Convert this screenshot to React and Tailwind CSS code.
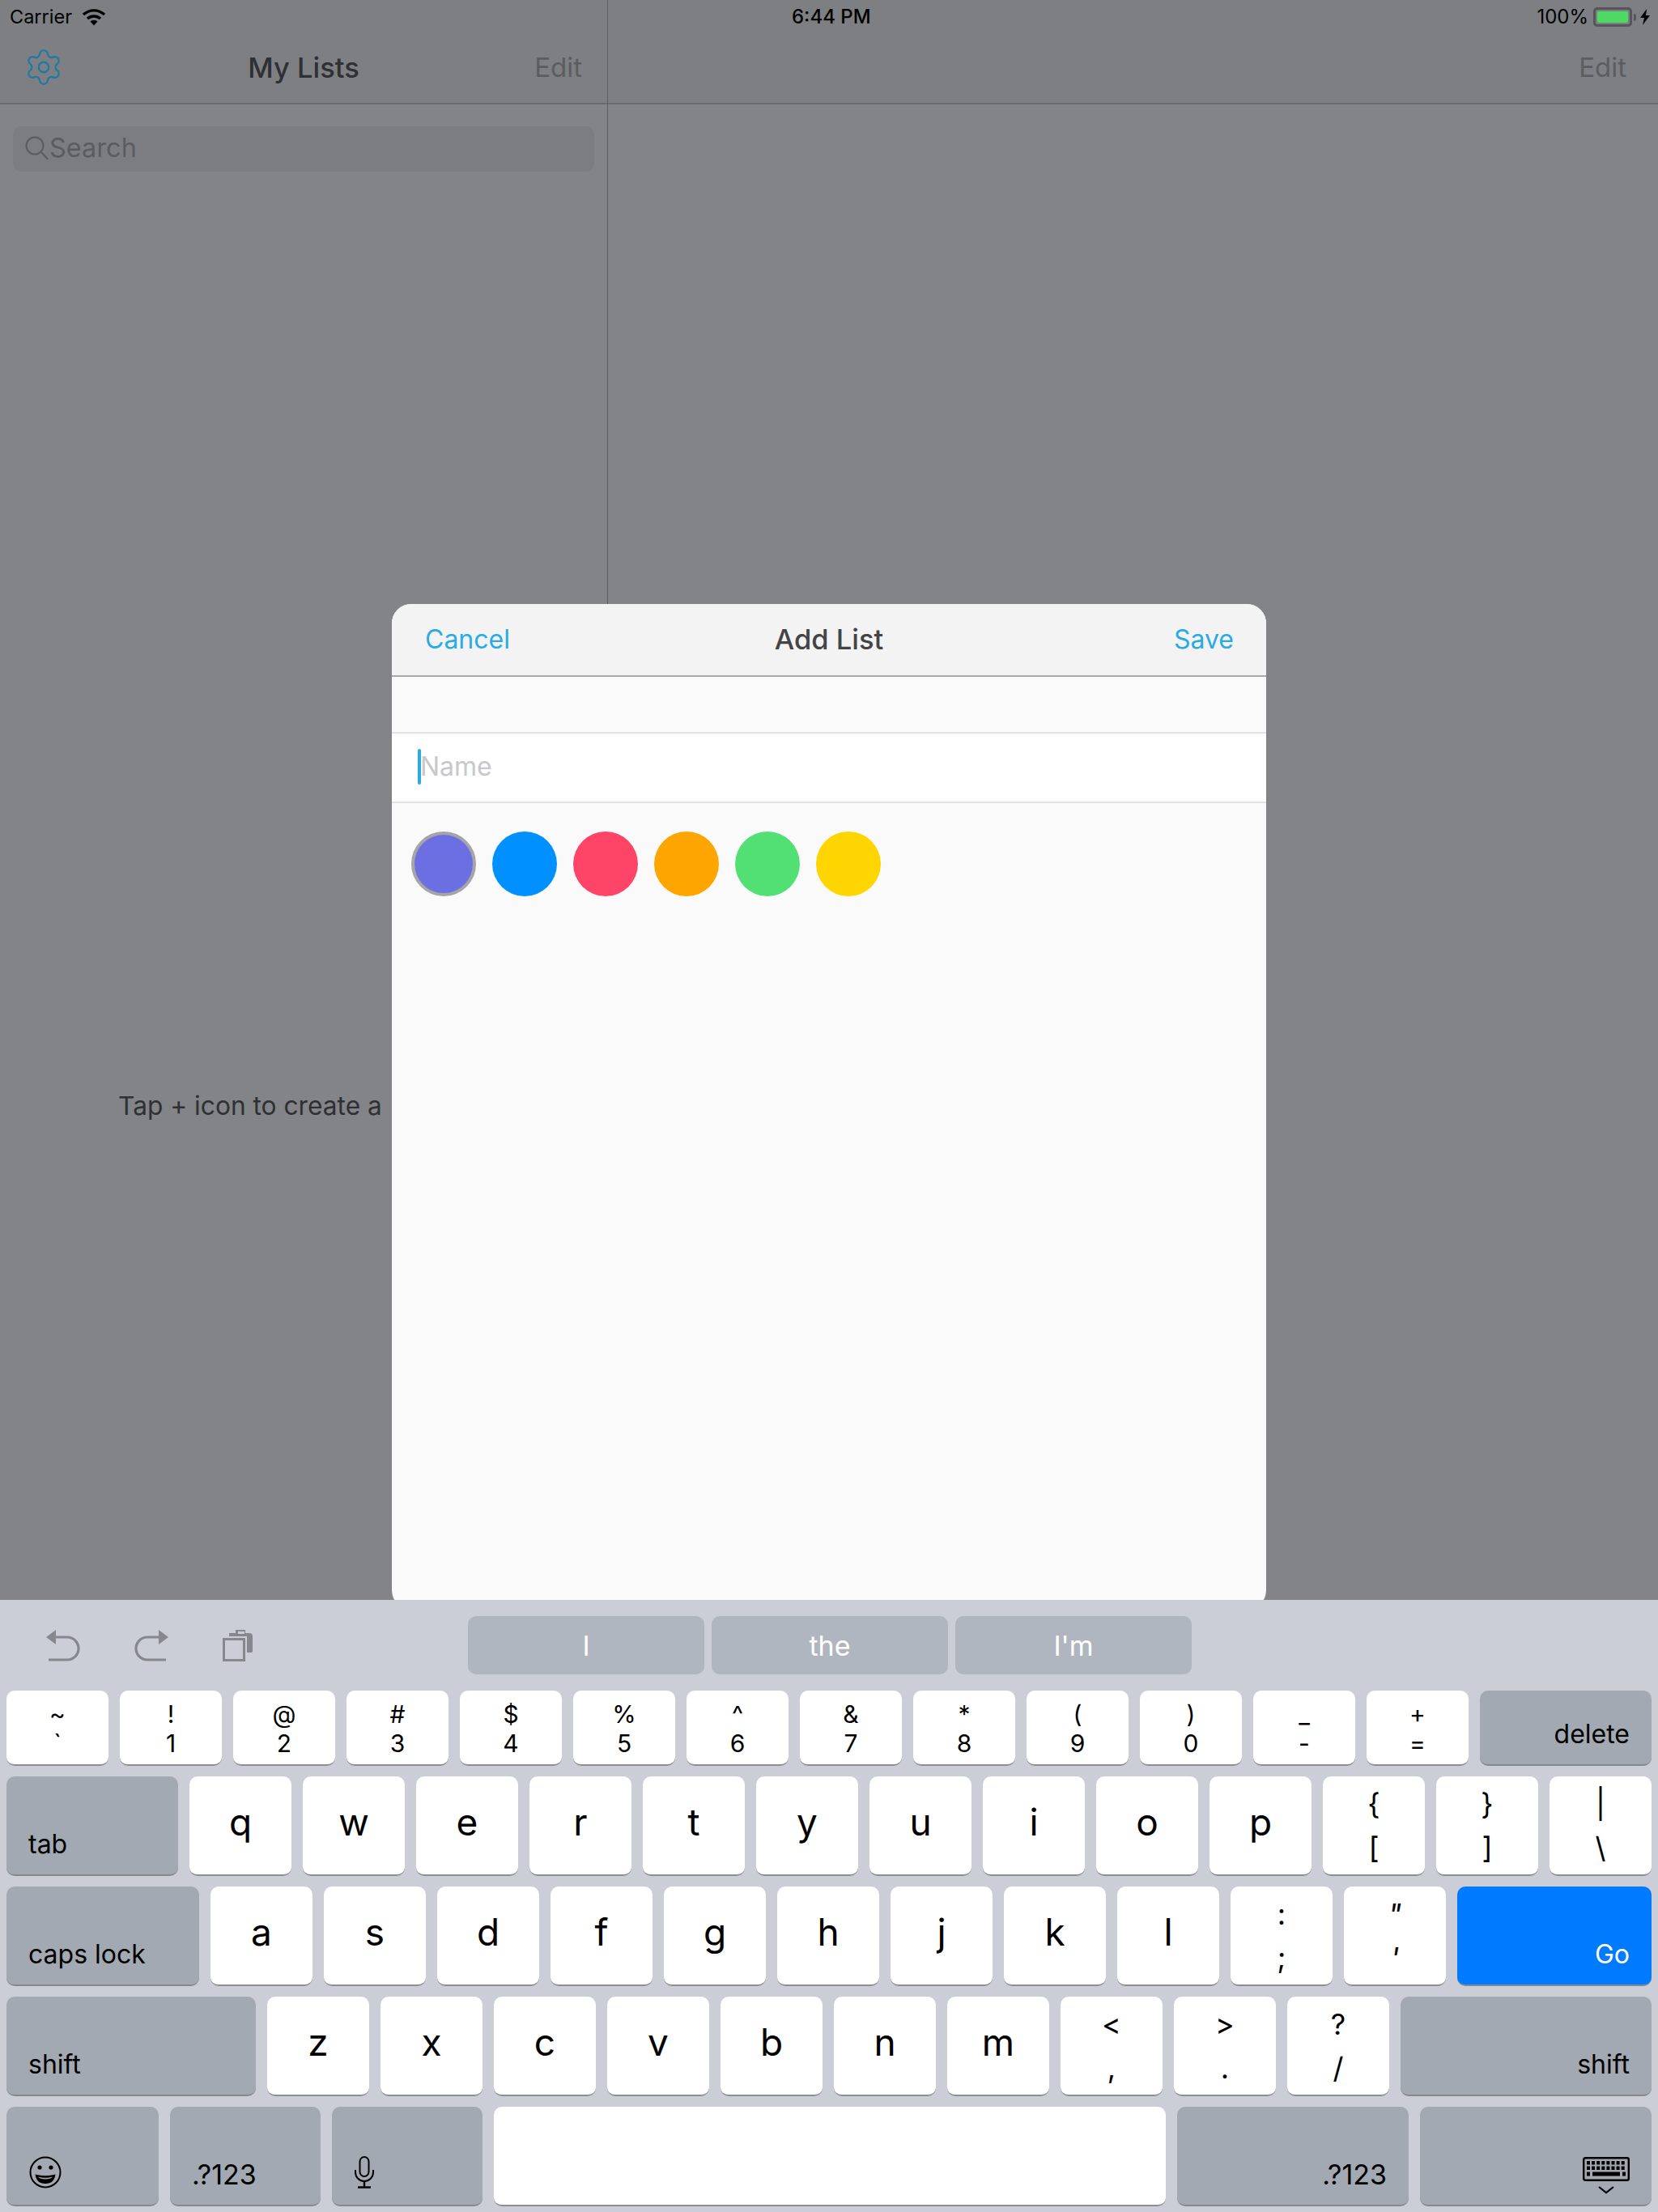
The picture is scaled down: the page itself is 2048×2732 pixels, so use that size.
import { Settings } from 'lucide-react';

const row1 = [['~', '`'], ['!', '1'], ['@', '2'], ['#', '3'], ['$', '4'], ['%', '5'], ['^', '6'], ['&', '7'], ['*', '8'], ['(', '9'], [')', '0'], ['_', '-'], ['+', '=']];

function Key({ children, className = 'w-[126px]' }) {
  return (
    <div className={`${className} shrink-0 h-full rounded-[10px] bg-white border-b-2 border-[#8b8e94] text-black flex flex-col items-center`}>
      {children}
    </div>
  );
}

function Letter({ ch }) {
  return (
    <Key>
      <span className="text-[46px] leading-[56px] mt-[28px]">{ch}</span>
    </Key>
  );
}

function Sym({ top, bottom, slant }) {
  return (
    <Key>
      <span className={`text-[36px] leading-[54px] mt-[7px] ${slant ? 'italic' : ''}`}>{top}</span>
      <span className={`text-[36px] leading-[54px] ${slant ? 'italic' : ''}`}>{bottom}</span>
    </Key>
  );
}

function NumKey({ top, bottom }) {
  return (
    <Key>
      <span className="text-[30px] leading-[36px] mt-[11px]">{top}</span>
      <span className="text-[30px] leading-[36px]">{bottom}</span>
    </Key>
  );
}

function Special({ className, children, right }) {
  return (
    <div className={`${className} shrink-0 h-full rounded-[10px] bg-[#a3a9b3] border-b-2 border-[#85888e] flex items-end px-[27px] pb-[19px] text-[32px] leading-[36px] text-black ${right ? 'justify-end' : 'justify-start'}`}>
      {children}
    </div>
  );
}

function Wifi() {
  return (
    <svg width="30" height="22" viewBox="0 0 30 22" className="ml-[12px]">
      <path d="M2 8 a19 19 0 0 1 26 0" fill="none" stroke="#000" strokeWidth="3.4" />
      <path d="M7 13 a12 12 0 0 1 16 0" fill="none" stroke="#000" strokeWidth="3.4" />
      <path d="M10.5 16.5 a6.5 6.5 0 0 1 9 0 L15 21.5 Z" fill="#000" />
    </svg>
  );
}

function SearchIcon() {
  return (
    <svg width="30" height="30" viewBox="0 0 30 30" className="shrink-0">
      <circle cx="12" cy="12" r="10.5" fill="none" stroke="#5b5c60" strokeWidth="2" />
      <path d="M19.5 19.5 L28 28.5" stroke="#5b5c60" strokeWidth="2.2" />
    </svg>
  );
}

function UndoIcon() {
  return (
    <svg width="44" height="40" viewBox="0 0 44 40" className="shrink-0">
      <path d="M0 9 L12 0 V18 Z" fill="#86888d" />
      <path d="M10 9 H26 A14 14 0 0 1 26 37 H3" fill="none" stroke="#86888d" strokeWidth="3.2" />
    </svg>
  );
}

function RedoIcon() {
  return (
    <svg width="44" height="40" viewBox="0 0 44 40" className="shrink-0">
      <path d="M43 9 L31 0 V18 Z" fill="#86888d" />
      <path d="M33 9 H17 A14 14 0 0 0 17 37 H40" fill="none" stroke="#86888d" strokeWidth="3.2" />
    </svg>
  );
}

function PasteIcon() {
  return (
    <svg width="38" height="40" viewBox="0 0 38 40" className="shrink-0">
      <path d="M8 5 H16 V1 H28 V5 H33 Q37 5 37 9 V27 Q37 29 34 29 H30 V9 H8 Z" fill="#86888d" />
      <rect x="19" y="3" width="8" height="3" fill="#cbced6" />
      <rect x="1.5" y="12.5" width="25" height="26" fill="none" stroke="#86888d" strokeWidth="3" />
    </svg>
  );
}

function Smiley() {
  return (
    <svg width="40" height="40" viewBox="0 0 40 40" className="block">
      <circle cx="20" cy="20" r="18.5" fill="none" stroke="#000" strokeWidth="2" />
      <circle cx="13" cy="14" r="2.6" fill="#000" />
      <circle cx="27" cy="14" r="2.6" fill="#000" />
      <path d="M7.5 22.5 Q20 26 32.5 22.5 Q31 34 20 34 Q9 34 7.5 22.5 Z" fill="#000" />
      <path d="M11 25.5 Q20 28 29 25.5 Q27 28.5 20 28.5 Q13 28.5 11 25.5 Z" fill="#a3a9b3" />
    </svg>
  );
}

function Mic() {
  return (
    <svg width="26" height="40" viewBox="0 0 26 40" className="block">
      <rect x="7.5" y="1" width="11" height="24" rx="5.5" fill="none" stroke="#000" strokeWidth="2" />
      <path d="M2 17 V20 A11 11 0 0 0 24 20 V17" fill="none" stroke="#000" strokeWidth="2" />
      <path d="M13 31 V38 M5 38.5 H21" stroke="#000" strokeWidth="2.4" />
    </svg>
  );
}

function KeyboardIcon() {
  const dots = [];
  for (let r = 0; r < 2; r++) {
    for (let c = 0; c < 8; c++) {
      dots.push(<rect key={`${r}-${c}`} x={5 + c * 6.1} y={5 + r * 6.5} width="4" height="4.5" fill="#000" />);
    }
  }
  return (
    <svg width="58" height="46" viewBox="0 0 58 46" className="block">
      <rect x="1.2" y="1.2" width="55.6" height="27.6" rx="2" fill="none" stroke="#000" strokeWidth="2.4" />
      {dots}
      <rect x="5" y="18.5" width="4" height="5" fill="#000" />
      <rect x="12" y="18.5" width="34" height="5" fill="#000" />
      <rect x="49" y="18.5" width="4" height="5" fill="#000" />
      <path d="M20 37 L29 44 L38 37" fill="none" stroke="#000" strokeWidth="2.2" />
    </svg>
  );
}

export default function App() {
  const swatches = ['bg-[#0090ff]', 'bg-[#ff4567]', 'bg-[#ffa500]', 'bg-[#52e075]', 'bg-[#ffd500]'];

  return (
    <div className="relative w-[2048px] h-[2732px] overflow-hidden flex flex-col font-['Inter',sans-serif]">
      {/* dimmed split view */}
      <div className="h-[1976px] shrink-0 flex bg-[#838488]">
        <div className="w-[751px] shrink-0 border-r border-[#5f6064] flex flex-col">
          <div className="bg-[#7e7f83] border-b-2 border-[#696a6e] h-[129px] shrink-0">
            <div className="h-[40px] flex items-center pl-[12px] pt-[2px] text-[23.5px] text-black">
              <span>Carrier</span>
              <Wifi />
            </div>
            <div className="h-[87px] relative flex items-center justify-center text-[34.5px] font-medium text-[#2f3034]">
              <Settings size={50} strokeWidth={1.1} className="absolute left-[29px] top-[18px] text-[#1d7ba3]" />
              <span>My Lists</span>
              <span className="absolute right-[31px] text-[33px] font-normal text-[#5c5d61]">Edit</span>
            </div>
          </div>
          <div className="mx-[16px] mt-[27px] h-[56px] rounded-[10px] bg-[#7c7d81] flex items-center pl-[15px] pb-[2px] text-[32.5px] text-[#5b5c60]">
            <SearchIcon />
            <span>Search</span>
          </div>
          <div className="pl-[146px] mt-[1134px] text-[31.7px] leading-[40px] text-[#2f3034] whitespace-nowrap">Tap + icon to create a</div>
        </div>
        <div className="flex-1">
          <div className="bg-[#7e7f83] border-b-2 border-[#696a6e] h-[129px]">
            <div className="h-[40px] flex items-center pl-[227px] pt-[2px] text-[24px] font-medium text-black">
              <span>6:44 PM</span>
              <span className="ml-auto font-normal">100%</span>
              <div className="ml-[6px] w-[48px] h-[24px] rounded-[5px] border-[3px] border-[#55565a] p-[2px]">
                <div className="w-full h-full rounded-[2px] bg-[#4cd964]"></div>
              </div>
              <div className="w-[3px] h-[9px] ml-[2px] rounded-r-[3px] bg-[#55565a]"></div>
              <svg width="12" height="20" viewBox="0 0 12 20" className="ml-[5px] mr-[10px]">
                <path d="M8 0 L0 11 H5 L3 20 L12 8 H7 Z" fill="#000" />
              </svg>
            </div>
            <div className="h-[87px] flex items-center justify-end pr-[39px] text-[33px] text-[#5c5d61]">Edit</div>
          </div>
        </div>
      </div>

      {/* Add List sheet */}
      <div className="absolute left-[484px] top-[746px] w-[1080px] h-[1242px] rounded-[24px] overflow-hidden bg-[#fafafa] flex flex-col">
        <div className="h-[90px] shrink-0 bg-[#f3f3f3] border-b-2 border-[#a9a9ab] flex items-center justify-between pl-[41px] pr-[40px] relative text-[32px] text-[#2aace2]">
          <span>Cancel</span>
          <span className="absolute left-0 right-0 text-center text-[34.5px] font-medium text-[#444446]">Add List</span>
          <span>Save</span>
        </div>
        <div className="mt-[68px] h-[88px] shrink-0 bg-white border-y-2 border-[#e3e3e5] flex items-center pl-[32px] pb-[2px] text-[32px] text-[#c7c7cd]">
          <div className="w-[4px] h-[44px] rounded-full bg-[#2aace2]"></div>
          <span className="-ml-[1px]">Name</span>
        </div>
        <div className="mt-[35px] pl-[24px] flex gap-[20px]">
          <div className="w-[80px] h-[80px] rounded-full bg-[#6c6fe2] border-[4px] border-[#a5a5a9]"></div>
          {swatches.map((c) => (
            <div key={c} className={`w-[80px] h-[80px] rounded-full ${c}`}></div>
          ))}
        </div>
      </div>

      {/* keyboard */}
      <div className="relative z-10 flex-1 bg-[#cbced6] flex flex-col px-[8px]">
        <div className="h-[72px] mt-[20px] flex items-center">
          <div className="ml-[49px] mt-[2px]"><UndoIcon /></div>
          <div className="ml-[64px] mt-[2px]"><RedoIcon /></div>
          <div className="ml-[66px]"><PasteIcon /></div>
          <div className="ml-[265px] flex gap-[9px] text-[34px] text-white">
            <div className="w-[292px] h-[72px] rounded-[10px] bg-[#b0b6c0] flex items-center justify-center">I</div>
            <div className="w-[292px] h-[72px] rounded-[10px] bg-[#b0b6c0] flex items-center justify-center">the</div>
            <div className="w-[292px] h-[72px] rounded-[10px] bg-[#b0b6c0] flex items-center justify-center">I'm</div>
          </div>
        </div>

        <div className="h-[93px] mt-[20px] flex gap-[14px]">
          {row1.map(([t, b]) => <NumKey key={b} top={t} bottom={b} />)}
          <Special className="w-[212px]" right>delete</Special>
        </div>

        <div className="h-[123px] mt-[13px] flex gap-[14px]">
          <Special className="w-[212px]">tab</Special>
          {'qwertyuiop'.split('').map((c) => <Letter key={c} ch={c} />)}
          <Sym top="{" bottom="[" />
          <Sym top="}" bottom="]" />
          <Sym top="|" bottom="\" />
        </div>

        <div className="h-[123px] mt-[13px] flex gap-[14px]">
          <Special className="w-[238px]">caps lock</Special>
          {'asdfghjkl'.split('').map((c) => <Letter key={c} ch={c} />)}
          <Sym top=":" bottom=";" />
          <Sym top='"' bottom="'" slant />
          <div className="w-[240px] shrink-0 h-full rounded-[10px] bg-[#007aff] border-b-2 border-[#85888e] flex items-end justify-end px-[27px] pb-[19px] text-[32px] leading-[36px] text-white">Go</div>
        </div>

        <div className="h-[123px] mt-[13px] flex gap-[14px]">
          <Special className="w-[308px]">shift</Special>
          {'zxcvbnm'.split('').map((c) => <Letter key={c} ch={c} />)}
          <Sym top="<" bottom="," />
          <Sym top=">" bottom="." />
          <Sym top="?" bottom="/" />
          <Special className="w-[310px]" right>shift</Special>
        </div>

        <div className="h-[123px] mt-[13px] flex gap-[14px]">
          <Special className="w-[188px]"><div className="ml-[1px] mb-[1px]"><Smiley /></div></Special>
          <Special className="w-[186px]"><span className="text-[34px]">.?123</span></Special>
          <Special className="w-[186px]"><div className="mb-[1px]"><Mic /></div></Special>
          <div className="w-[830px] shrink-0 h-full rounded-[10px] bg-white border-b-2 border-[#8b8e94]"></div>
          <Special className="w-[286px]" right><span className="text-[34px]">.?123</span></Special>
          <Special className="w-[286px]" right><div className="-mb-[6px]"><KeyboardIcon /></div></Special>
        </div>
      </div>
    </div>
  );
}
